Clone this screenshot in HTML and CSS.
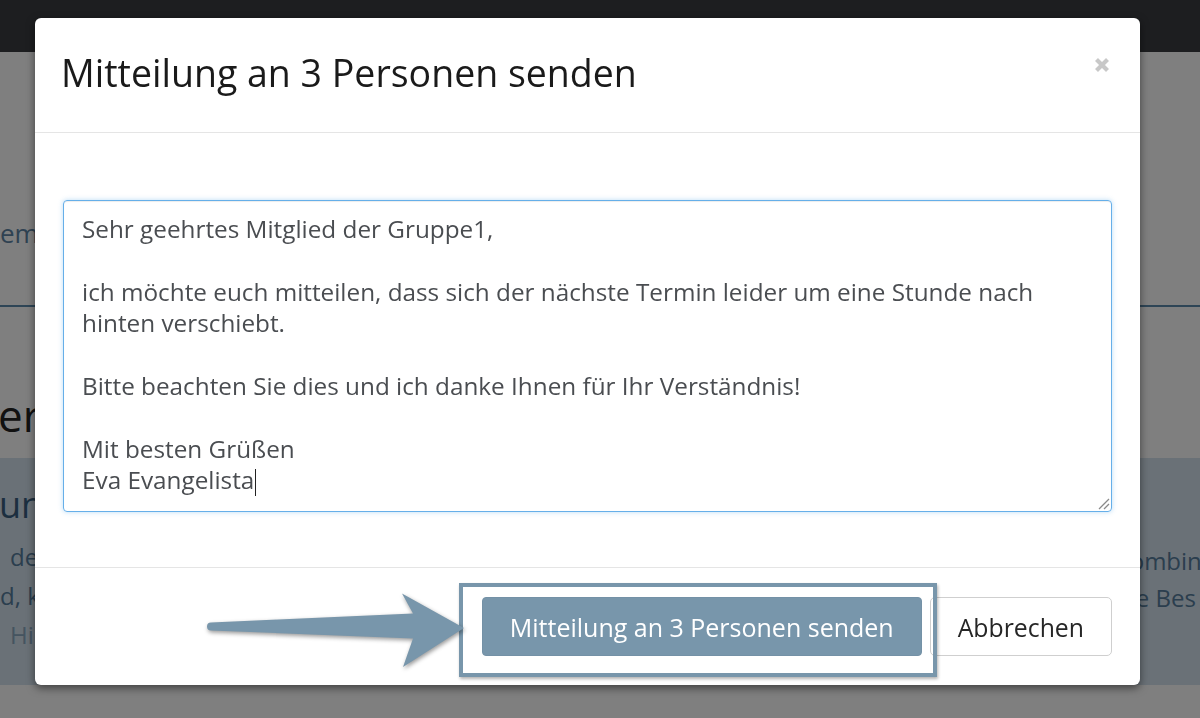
FILE: index.html
```html
<!DOCTYPE html>
<html lang="de">
<head>
<meta charset="utf-8">
<title>Mitteilung senden</title>
<link rel="stylesheet" href="styles.css">
</head>
<body>
<div class="page">
  <header class="topnav"></header>
  <main class="content">
    <nav class="tabs"><span class="tab">em</span></nav>
    <h1 class="page-title">er</h1>
    <section class="panel">
      <div class="panel-left">
        <h2 class="panel-heading">ung</h2>
        <p class="panel-line indent">de</p>
        <p class="panel-line">d, k</p>
        <p class="panel-line indent muted">Hil</p>
      </div>
      <div class="panel-right">
        <p class="panel-line r1">Kombin</p>
        <p class="panel-line r2">die Bes</p>
      </div>
    </section>
  </main>
</div>

<div class="backdrop"></div>

<div class="modal" role="dialog" aria-labelledby="modal-title">
  <div class="modal-header">
    <h4 class="modal-title" id="modal-title">Mitteilung an 3 Personen senden</h4>
    <button class="close" type="button" aria-label="Schließen">
      <svg width="16" height="16" viewBox="0 0 16 16"><path d="M2.5 2.5 L13.5 13.5 M13.5 2.5 L2.5 13.5" stroke="#c8c8c8" stroke-width="4.2" fill="none"/></svg>
    </button>
  </div>
  <div class="modal-body">
    <div class="message">Sehr geehrtes Mitglied der Gruppe1,

ich möchte euch mitteilen, dass sich der nächste Termin leider um eine Stunde nach
hinten verschiebt.

Bitte beachten Sie dies und ich danke Ihnen für Ihr Verständnis!

Mit besten Grüßen
Eva Evangelista<span class="caret"></span><svg class="grip" width="14" height="14" viewBox="0 0 14 14"><path d="M13 3 L3 13 M13 8 L8 13" stroke="#8a8a8a" stroke-width="1.3" fill="none"/></svg></div>
  </div>
  <div class="modal-footer">
    <button class="btn btn-primary" type="button">Mitteilung an 3 Personen senden</button>
    <button class="btn btn-default" type="button">Abbrechen</button>
    <div class="highlight"></div>
    <svg class="arrow" width="280" height="90" viewBox="200 583 280 90">
      <path d="M211 622.5 L413 613.5 L402 593.5 L464 628 L403 667 L413 638.5 L211 630.5 A4 4 0 0 1 211 622.5 Z" fill="#7896ab"/>
    </svg>
  </div>
</div>
</body>
</html>
```

FILE: styles.css
```css
* { box-sizing: border-box; }
html, body { margin: 0; height: 100%; overflow: hidden; }
body {
  font-family: "Open Sans", "Noto Sans", sans-serif;
  background: #ffffff;
  color: #333;
}

/* ---------- background page ---------- */
.topnav { height: 52px; background: #3a3d41; }
.tabs {
  padding: 163px 0 54px;
  border-bottom: 2px solid #5c8aac;
  font-size: 26px;
  line-height: 36px;
  color: #5e84a4;
}
.page-title {
  margin: 82px 0 17px -2px;
  font-size: 44px;
  line-height: 52px;
  font-weight: 400;
  color: #222;
}
.panel {
  height: 227px;
  background: #d4e2ee;
  display: flex;
  justify-content: space-between;
}
.panel-left { padding-top: 25px; }
.panel-heading {
  margin: 0 0 10px -1px;
  font-size: 36px;
  line-height: 44px;
  font-weight: 400;
  color: #385e80;
}
.panel-line {
  margin: 0;
  font-size: 24px;
  line-height: 39px;
  color: #567c9c;
  white-space: nowrap;
}
.panel-line.indent { padding-left: 10px; }
.panel-line.muted { color: #8aa8c0; }
.panel-right {
  width: 85px;
  padding-top: 84px;
}
.panel-right .panel-line { line-height: 37px; }

/* ---------- overlay ---------- */
.backdrop {
  position: fixed;
  inset: 0;
  background: rgba(0, 0, 0, 0.5);
}

/* ---------- modal ---------- */
.modal {
  position: absolute;
  left: 35px;
  top: 18px;
  width: 1105px;
  height: 667px;
  background: #fff;
  border-radius: 6px;
  box-shadow: 0 3px 9px rgba(0, 0, 0, 0.5);
  display: flex;
  flex-direction: column;
}
.modal-header {
  display: flex;
  justify-content: space-between;
  align-items: flex-start;
  padding: 35px 30px 39px 26px;
  border-bottom: 1px solid #e5e5e5;
}
.modal-title {
  margin: 0;
  font-size: 37.5px;
  line-height: 40px;
  font-weight: 400;
  color: #1a1a1a;
}
.close {
  margin-top: 4px;
  padding: 0;
  border: 0;
  background: none;
  width: 16px;
  height: 16px;
  display: block;
}
.close svg { display: block; }

.modal-body { padding: 67px 28px 55px; }
.message {
  position: relative;
  height: 312px;
  border: 1px solid #66afe9;
  border-radius: 4px;
  padding: 12px 18px;
  font-size: 24.3px;
  line-height: 31.4px;
  color: #4a4d51;
  white-space: pre;
  overflow: hidden;
  box-shadow: inset 0 1px 1px rgba(0, 0, 0, 0.075), 0 0 5px rgba(102, 175, 233, 0.45);
}
.caret {
  display: inline-block;
  width: 0;
  height: 27px;
  border-left: 1.5px solid #222;
  vertical-align: -7px;
  margin-left: 1px;
}
.grip {
  position: absolute;
  right: 1px;
  bottom: 1px;
}

.modal-footer {
  position: relative;
  flex: 1;
  border-top: 1px solid #e5e5e5;
  padding: 29px 28px;
  display: flex;
  justify-content: flex-end;
  align-items: flex-start;
  gap: 8px;
}
.btn {
  font-family: inherit;
  height: 59px;
  padding: 0 27px;
  border-radius: 4px;
  cursor: pointer;
}
.btn-primary {
  background: #7896ab;
  border: 1px solid #7491a6;
  color: #fff;
  font-size: 25px;
  font-weight: 500;
}
.btn-default {
  background: #fff;
  border: 1px solid #cfcfcf;
  color: #262626;
  font-size: 24.8px;
  border-radius: 5px;
}

/* annotation */
.highlight {
  position: absolute;
  left: 424px;
  top: 15px;
  width: 478px;
  height: 94px;
  border: 4px solid #7896ab;
  box-shadow: 1px 2px 3px rgba(0, 0, 0, 0.3);
  pointer-events: none;
}
.arrow {
  position: absolute;
  left: 165px;
  top: 15px;
  filter: drop-shadow(1px 2px 2px rgba(0, 0, 0, 0.4));
  pointer-events: none;
}
```
